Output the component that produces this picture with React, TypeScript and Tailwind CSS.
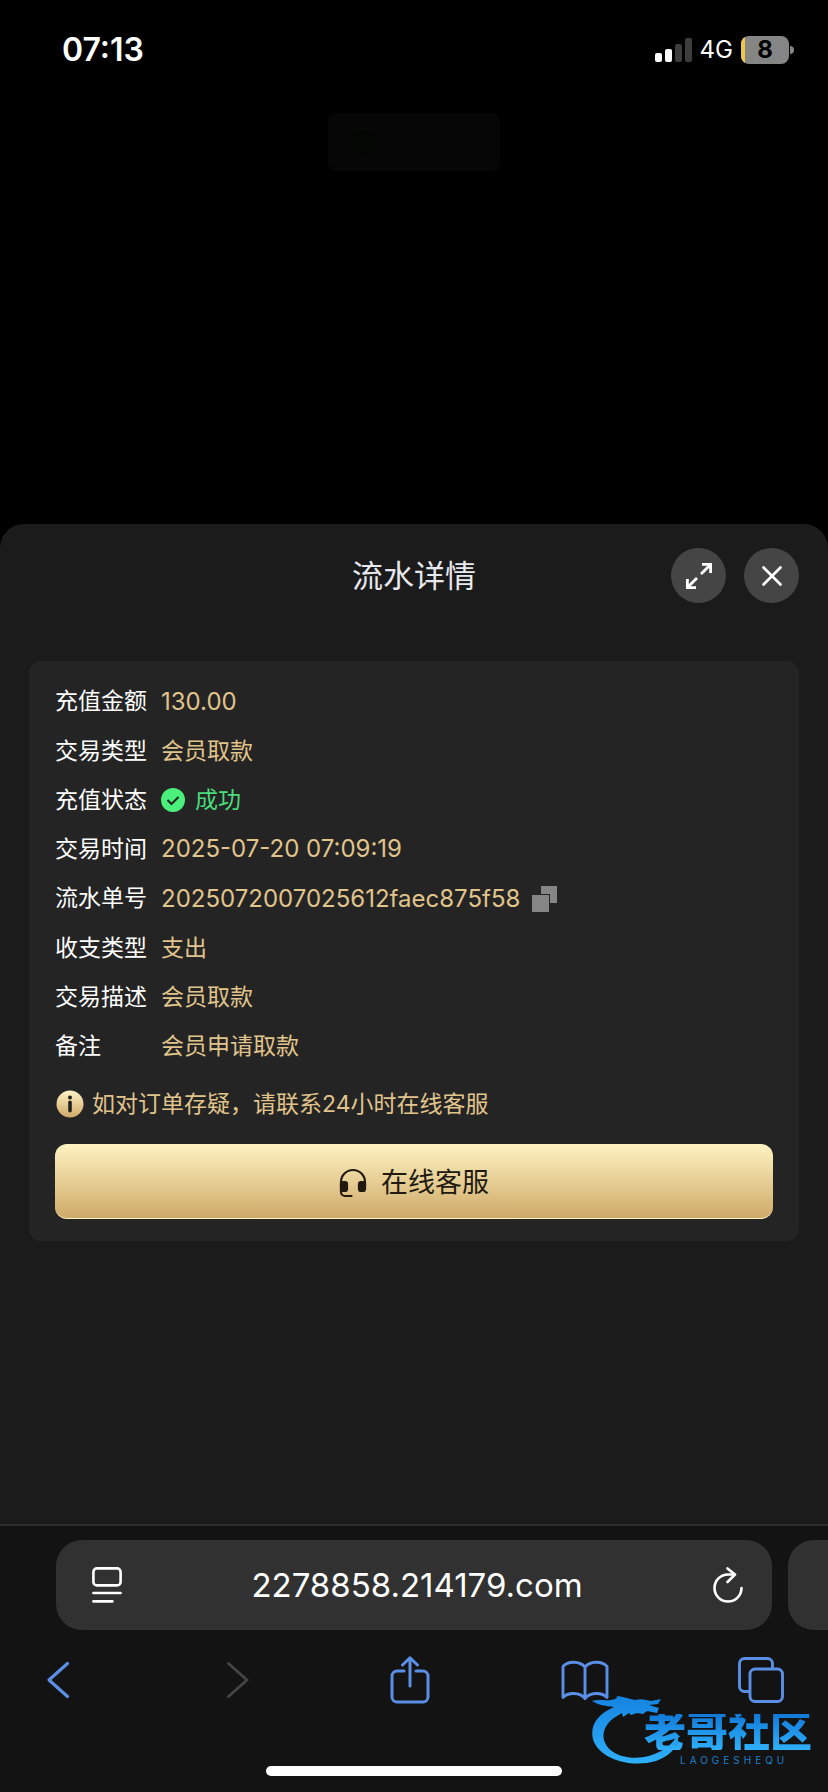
import { useState } from "react";

const sans = "font-['Inter','Noto_Sans_CJK_SC',sans-serif]";

const rows = [
  { label: "充值金额", value: "130.00", latin: true },
  { label: "交易类型", value: "会员取款" },
  { label: "充值状态", value: "成功", status: true },
  { label: "交易时间", value: "2025-07-20 07:09:19", latin: true },
  { label: "流水单号", value: "2025072007025612faec875f58", latin: true, copy: true },
  { label: "收支类型", value: "支出" },
  { label: "交易描述", value: "会员取款" },
  { label: "备注", value: "会员申请取款" },
];

function StatusBar() {
  return (
    <header className="flex items-center justify-between pt-[30px] pl-[62px] pr-[34px]">
      <time className="text-[32px] leading-10 font-semibold text-white">07:13</time>
      <div className="flex items-center gap-2">
        <svg className="w-[37px] h-6" viewBox="0 0 37 24" aria-label="Signal">
          <rect x="0" y="15" width="7" height="9" rx="2" fill="#fff" />
          <rect x="10" y="11" width="7" height="13" rx="2" fill="#fff" />
          <rect x="20" y="6" width="7" height="18" rx="2" fill="#3d3d3d" />
          <rect x="30" y="0" width="7" height="24" rx="2" fill="#3d3d3d" />
        </svg>
        <span className="text-2xl leading-8 text-white">4G</span>
        <div className="flex items-center gap-px">
          <div className="w-12 h-7 rounded-lg overflow-hidden bg-[#858585] flex">
            <span className="w-1 bg-[#ecc94b]" />
            <span className="flex-1 pr-1 text-center text-2xl leading-7 font-bold text-black">8</span>
          </div>
          <span className="w-1 h-2 rounded-r-full bg-[#858585]" />
        </div>
      </div>
    </header>
  );
}

function CheckBadge() {
  return (
    <svg className="w-6 h-6 shrink-0" viewBox="0 0 24 24" aria-hidden="true">
      <circle cx="12" cy="12" r="12" fill="#4bf07c" />
      <path d="M6.500 12l4 4 7-7" fill="none" stroke="#222" strokeWidth="2" />
    </svg>
  );
}

function InfoBadge() {
  return (
    <svg className="w-7 h-7 shrink-0" viewBox="0 0 28 28" aria-hidden="true">
      <defs>
        <linearGradient id="infoGold" x1="0" y1="0" x2="0" y2="1">
          <stop offset="0" stopColor="#fff3c4" />
          <stop offset="1" stopColor="#cfa968" />
        </linearGradient>
      </defs>
      <circle cx="14" cy="14" r="13.5" fill="url(#infoGold)" />
      <circle cx="14" cy="7.6" r="2" fill="#222" />
      <path d="M14 12.3v8.4" stroke="#222" strokeWidth="3.6" strokeLinecap="round" />
    </svg>
  );
}

function Watermark() {
  return (
    <div className="absolute right-4 bottom-[22px] w-[222px] h-[74px] pointer-events-none">
      <svg className="absolute inset-0 w-full h-full" viewBox="0 0 222 74" aria-hidden="true">
        <defs>
          <linearGradient id="dragon" x1="0" y1="0" x2="0" y2="1">
            <stop offset="0" stopColor="#1583e0" />
            <stop offset="1" stopColor="#2fb0fb" />
          </linearGradient>
        </defs>
        <path
          fill="url(#dragon)"
          d="M2 5C9 3 15 5 21 4c6-1 8-4 4-4 8 0 14 3 20 4 6-2 12 0 16 1l10-2-3 5-9 1 10 3-2 5-10-2-4 3-6-1-6 2-2-2-6 4-1-4-5 3C16 26 12 36 14 44c4 14 22 20 40 17 16-3 28-11 34-23 2 12-8 22-22 27-24 7-54-1-62-19C-2 30 8 18 24 11 16 10 8 9 2 5z"
        />
      </svg>
      <span className="absolute right-0 top-[18px] text-[42px] leading-9 font-black bg-linear-to-b from-[#1279d8] to-[#2fb0fb] bg-clip-text text-transparent whitespace-nowrap">
        老哥社区
      </span>
      <span className="absolute left-[90px] top-[59px] text-[10px] leading-[10px] tracking-[0.4em] text-[#1f7fc6]">LAOGESHEQU</span>
    </div>
  );
}

function BrowserBar() {
  const tool = "w-12 h-12 flex items-center justify-center text-[#5b8fe6]";
  return (
    <footer className="relative bg-[#131313] border-t-2 border-[#2c2d2c] pt-[14px] pb-4">
      <div className="flex gap-4 pl-14 overflow-hidden">
        <div className="flex-1 h-[90px] rounded-[26px] bg-[#313131] flex items-center justify-between pl-9 pr-7">
          <button aria-label="Page settings">
            <svg className="w-[30px] h-9" viewBox="0 0 30 36" fill="none" stroke="#fff" strokeWidth="2.6" strokeLinecap="round">
              <rect x="1.4" y="1.4" width="27.2" height="17" rx="3.5" />
              <path d="M1.4 26h27.2M1.4 34.4h19" />
            </svg>
          </button>
          <input
            aria-label="Address"
            defaultValue="2278858.214179.com"
            className="min-w-0 flex-1 bg-transparent text-center text-[33px] leading-10 text-white outline-none"
          />
          <button aria-label="Reload">
            <svg className="w-8 h-9" viewBox="0 0 32 36" fill="none" stroke="#fff" strokeWidth="2.6" strokeLinecap="round" strokeLinejoin="round">
              <path d="M29.500 21A13.500 13.500 0 1 1 16 7.500h6" />
              <path d="M15.500 1.400L23 7.500l-7.500 7.500" />
            </svg>
          </button>
        </div>
        <div className="w-10 h-[90px] rounded-l-[26px] bg-[#313131]" />
      </div>
      <nav className="mt-[26px] pl-[34px] pr-[43px] flex justify-between">
        <button className={tool} aria-label="Back">
          <svg className="w-6 h-10" viewBox="0 0 24 40" fill="none" stroke="currentColor" strokeWidth="3.200" strokeLinecap="round" strokeLinejoin="round">
            <path d="M21.500 3.500L3 20l18.500 16.500" />
          </svg>
        </button>
        <button className="w-12 h-12 flex items-center justify-end text-[#454545]" aria-label="Forward" disabled>
          <svg className="w-6 h-10 mr-2" viewBox="0 0 24 40" fill="none" stroke="currentColor" strokeWidth="2.800" strokeLinecap="round" strokeLinejoin="round">
            <path d="M2.500 3.500L21 20 2.500 36.500" />
          </svg>
        </button>
        <button className={tool} aria-label="Share">
          <svg className="w-10 h-12" viewBox="0 0 40 48" fill="none" stroke="currentColor" strokeWidth="3" strokeLinecap="round" strokeLinejoin="round">
            <path d="M14 15H7a5 5 0 0 0-5 5v21a5 5 0 0 0 5 5h26a5 5 0 0 0 5-5V20a5 5 0 0 0-5-5h-7" />
            <path d="M20 30V2M12.500 9L20 1.800 27.500 9" />
          </svg>
        </button>
        <button className={tool} aria-label="Bookmarks">
          <svg className="w-12 h-10" viewBox="0 0 48 40" fill="none" stroke="currentColor" strokeWidth="2.900" strokeLinecap="round" strokeLinejoin="round">
            <path d="M24 7C19 1 7 .5 2 6.500v31c5-5.500 17-5.500 22 1 5-6.500 17-6.500 22-1v-31C41 .5 29 1 24 7zM24 7v31" />
          </svg>
        </button>
        <button className={tool} aria-label="Tabs">
          <svg className="w-[46px] h-[46px]" viewBox="0 0 46 46" fill="none" stroke="currentColor" strokeWidth="2.900" strokeLinejoin="round">
            <rect x="12" y="12" width="32.500" height="32.500" rx="5" />
            <path d="M12 34.500H6.500a5 5 0 0 1-5-5v-23a5 5 0 0 1 5-5h23a5 5 0 0 1 5 5V12" />
          </svg>
        </button>
      </nav>
      <div className="mt-[62px] mx-auto w-[296px] h-[10px] rounded-full bg-white" />
      <Watermark />
    </footer>
  );
}

export default function App() {
  const [copied, setCopied] = useState(false);

  return (
    <div className={`min-h-screen flex flex-col bg-black ${sans}`}>
      <div className="h-[524px]">
        <StatusBar />
        {/* page button dimmed behind the sheet */}
        <div className="mt-[43px] mx-auto w-[172px] h-[58px] rounded-lg bg-[#060606] flex items-center pl-6">
          <span className="w-6 h-6 rounded-full bg-[#030603]" />
        </div>
      </div>

      <main className="flex-1 rounded-t-[24px] bg-[#1b1b1b]">
        <div className="grid grid-cols-[1fr_auto_1fr] items-center pt-6 px-[29px]">
          <h1 className="col-start-2 text-[31px] leading-[44px] text-[#e8e9ee]">流水详情</h1>
          <div className="flex justify-end gap-[18px]">
            <button className="w-[55px] h-[55px] rounded-full bg-[#454545] flex items-center justify-center" aria-label="Expand">
              <svg className="w-7 h-7" viewBox="0 0 28 28" fill="none" stroke="#fff" strokeWidth="2.800">
                <path d="M17 2.400h8.600V11M25.600 2.400L16 12M2.400 17v8.600H11M2.400 25.600L12 16" />
              </svg>
            </button>
            <button className="w-[55px] h-[55px] rounded-full bg-[#454545] flex items-center justify-center" aria-label="Close">
              <svg className="w-5 h-5" viewBox="0 0 20 20" fill="none" stroke="#fff" strokeWidth="2.600" strokeLinecap="round">
                <path d="M1.500 1.500l17 17M18.500 1.500l-17 17" />
              </svg>
            </button>
          </div>
        </div>

        <section className="mt-[58px] mx-[29px] rounded-xl bg-[#242424] pt-4 pb-[22px] px-[26px]">
          <dl className="grid auto-rows-fr h-[394px] text-[23px]">
            {rows.map((r) => (
              <div key={r.label} className="flex items-center">
                <dt className="w-[106px] shrink-0 text-white">{r.label}</dt>
                <dd
                  className={`flex items-center ${r.status ? "gap-[10px] text-[#4bdc7c]" : "gap-3 text-[#e0c48c]"} ${r.latin ? "text-2xl" : ""}`}
                >
                  {r.status && <CheckBadge />}
                  {r.value}
                  {r.copy && (
                    <button onClick={() => setCopied(true)} aria-label={copied ? "已复制" : "复制"}>
                      <svg className="w-[26px] h-[26px]" viewBox="0 0 26 26" fill="#858585">
                        <path d="M9 0h16v17h-7V8H9z" />
                        <rect x="0" y="9" width="17" height="17" />
                      </svg>
                    </button>
                  )}
                </dd>
              </div>
            ))}
          </dl>
          <p className="mt-[15px] flex items-center gap-2 px-px text-[23px] leading-9 text-[#e0c48c]">
            <InfoBadge />
            如对订单存疑，请联系24小时在线客服
          </p>
          <button className="mt-[22px] w-full h-[75px] pt-1 rounded-xl border-b border-[#fff3c4] bg-linear-to-b from-[#fdf3c2] to-[#cfaa68] flex items-center justify-center gap-[14px] text-[27px] text-[#221a10]">
            <svg className="w-7 h-[30px]" viewBox="0 0 28 30" fill="none" stroke="currentColor" strokeWidth="2.200" strokeLinecap="round">
              <path d="M2 18v-4a12 12 0 0 1 24 0v4M2 16v8a4 4 0 0 0 4 4h6.500" />
              <rect x="2" y="14" width="6" height="9" rx="2" fill="currentColor" />
              <rect x="20" y="14" width="6" height="9" rx="2" fill="currentColor" />
            </svg>
            在线客服
          </button>
        </section>
      </main>

      <BrowserBar />
    </div>
  );
}
